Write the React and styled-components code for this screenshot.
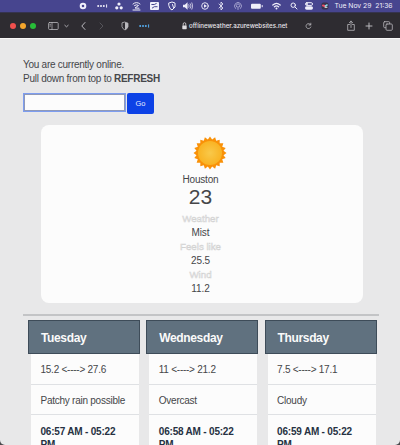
import React from "react";
import styled, { createGlobalStyle } from "styled-components";

const Global = createGlobalStyle`
  *{box-sizing:border-box}
  html,body{margin:0;height:445px;overflow:hidden;background:#4a4a4d}
  body{font-family:"Liberation Sans",Arial,sans-serif;color:#454649}
`;
const Screen = styled.div`
  width:400px;height:445px;overflow:hidden;display:flex;flex-direction:column;
`;
const MenuBar = styled.header`
  display:flex;align-items:center;height:13px;flex:none;background:#47458f;color:#f0effa;
  border-bottom:1px solid #35334f;
`;
const Clock = styled.div`
  margin-left:5.5px;font:6.8px/12px Inter,sans-serif;white-space:pre;
`;
const BrowserBar = styled.nav`
  display:flex;align-items:center;height:25px;flex:none;background:#2e2c31;color:#b9b8bd;
`;
const Light = styled.i`
  width:6px;height:6px;border-radius:50%;flex:none;background:${p => p.$color};
  margin-left:${p => p.$gap}px;
`;
const Address = styled.div`
  margin-left:2.5px;width:94.5px;color:#e9e8ec;font:500 6.2px/25px Inter,sans-serif;white-space:nowrap;
`;
const Icon = styled.svg`
  display:block;flex:none;width:${p => p.$w}px;height:${p => p.$h || 10}px;
  margin-left:${p => p.$gap}px;fill:none;stroke:currentColor;stroke-width:1;
  stroke-linecap:round;stroke-linejoin:round;color:${p => p.$color || "inherit"};
  .solid{fill:currentColor;stroke:none}
`;
const Page = styled.main`
  height:407px;flex:none;border-top:1px solid #f8f8f8;padding:19px 21px 0 23px;
  background:#e8e8e9;border-radius:0 0 5px 5px;overflow:hidden;
`;
const Status = styled.p`
  margin:0;font-size:10px;line-height:14px;letter-spacing:-.26px;
`;
const SearchForm = styled.form`
  display:flex;align-items:flex-start;margin-top:7px;height:22px;
`;
const SearchInput = styled.input`
  width:103px;height:19px;margin:0;padding:0 4px;border:1px solid #7d9df0;
  outline:0;background:#fcfcfc;box-shadow:inset 0 0 0 1px #8f99b8;font-size:9px;
`;
const GoButton = styled.button`
  width:27px;height:21px;margin:0 0 0 1px;padding:0;border:0;border-radius:2px;
  background:#0d42e6;color:#e4ebff;font:7.5px/21px "Liberation Sans",sans-serif;
`;
const Card = styled.section`
  width:322px;height:178px;margin:10px 0 0 18px;border-radius:8px;background:#fcfcfc;
  display:flex;flex-direction:column;align-items:center;padding:11px 3px 0 0;
`;
const Sun = styled.svg`
  display:block;width:34px;height:34px;flex:none;margin-left:19px;
`;
const City = styled.div`font-size:10px;line-height:12px;margin-top:4px;letter-spacing:-.2px;`;
const Temperature = styled.div`font-size:21px;line-height:22px;`;
const Readings = styled.dl`
  margin:4px 0 0;text-align:center;font-size:10px;line-height:14px;
`;
const Label = styled.dt`
  color:#f3f3f3;-webkit-text-stroke:.5px #d2d2d2;font-size:9.7px;height:14px;
`;
const Value = styled.dd`margin:0;height:14px;letter-spacing:-.1px;`;
const Divider = styled.hr`
  width:356px;height:2px;margin:11px 0 0;border:0;background:#c3c4c6;
`;
const Forecast = styled.section`
  display:grid;grid-template-columns:repeat(3,112px);column-gap:6.3px;margin:4px 0 0 5px;width:350px;
`;
const Day = styled.article`min-width:0;`;
const DayTitle = styled.h2`
  margin:0;height:34px;border:1px solid #3e4c59;background:#60717f;color:#fafafa;
  padding:0 12px;font-size:12px;line-height:34px;letter-spacing:-.36px;
`;
const Cell = styled.div`
  height:30.5px;margin:0 1px 0 3px;padding:0 9.5px;background:#fcfcfc;border-bottom:1px solid #dfe1e4;
  font-size:10px;line-height:32px;letter-spacing:-.25px;white-space:nowrap;
`;
const Daylight = styled.div`
  height:40px;margin:0 1px 0 3px;padding:9.5px 8px 0 9.5px;background:#fcfcfc;
  color:#263142;font-size:10px;font-weight:700;line-height:13.5px;letter-spacing:-.2px;
`;

const days = [
  { name: "Tuesday", range: "15.2 <----> 27.6", weather: "Patchy rain possible", hours: "06:57 AM - 05:22 PM" },
  { name: "Wednesday", range: "11 <----> 21.2", weather: "Overcast", hours: "06:58 AM - 05:22 PM" },
  { name: "Thursday", range: "7.5 <----> 17.1", weather: "Cloudy", hours: "06:59 AM - 05:22 PM" },
];

const sunPoints = Array.from({ length: 40 }, (_, i) => {
  const r = i % 2 ? 13.7 : 16.5;
  const a = (i * Math.PI) / 20 - Math.PI / 2;
  return `${(17 + r * Math.cos(a)).toFixed(2)},${(17 + r * Math.sin(a)).toFixed(2)}`;
}).join(" ");

function Dots({ gap, color }) {
  return (
    <Icon $w={11} $gap={gap} $color={color} viewBox="0 0 11 10">
      <g className="solid"><circle cx="1.2" cy="5" r="1" /><circle cx="4" cy="5" r="1" /><circle cx="6.8" cy="5" r="1" /></g>
      <path d="M9.6 3.8v2.4" />
    </Icon>
  );
}

function StatusIcons() {
  return (
    <>
      <Icon $w={8} $gap={79} viewBox="0 0 8 10"><circle cx="4" cy="5" r="2.3" strokeWidth="2" /></Icon>
      <Dots gap={10} />
      <Icon $w={8} $gap={6.5} viewBox="0 0 8 10"><g className="solid"><circle cx="4" cy="3" r="1.6" /><circle cx="1.8" cy="6.8" r="1.6" /><circle cx="6.2" cy="6.8" r="1.6" /></g></Icon>
      <Icon $w={9} $gap={9} viewBox="0 0 9 10"><path d="M1 3q3.5-3 7 0M2.5 4.5q2-1.5 4 0L3 7l4 .2M1 9h7" /></Icon>
      <Icon $w={9} $gap={9.5} viewBox="0 0 9 10"><rect className="solid" y="1" width="9" height="8" rx="1" /><path d="M1.8 3.5h2.5l2-1M2.3 7l2-1.3h2.8" stroke="#47458f" /></Icon>
      <Icon $w={8} $gap={8.5} viewBox="0 0 8 10"><path d="M1 2l3-1 3 1v4L4 9 2 7.5 1 5zM4.5 3.5l1 3" /></Icon>
      <Icon $w={10} $gap={7.5} viewBox="0 0 11 10"><path className="solid" d="M0 3.7h2L5 1v8L2 6.5H0z" /><path d="M6.4 3.5q1 1.5 0 3M8 2.5q2 2.5 0 5M9.8 1.5q2 3.5 0 7" strokeWidth=".8" /></Icon>
      <Icon $w={8} $gap={7.5} viewBox="0 0 8 10"><circle cx="4" cy="5" r="3.3" strokeWidth=".9" /><path className="solid" d="M3 3.2L6 5 3 6.8z" /></Icon>
      <Icon $w={6} $gap={9.5} viewBox="0 0 6 10"><path d="M1 3l4 4-2 2V1l2 2-4 4" strokeWidth=".8" /></Icon>
      <Icon $w={8} $gap={9.5} viewBox="0 0 8 10" $color="#aaa8d2"><path d="M1.5 7.5a3.5 3.5 0 115 0M2.7 6a1.8 1.8 0 112.6 0M4 5.5v3" strokeWidth=".9" /></Icon>
      <Icon $w={12} $gap={9} viewBox="0 0 12 10"><rect className="solid" x="0" y="2.7" width="9.8" height="5" rx="1" /><path d="M11.2 4.5v1.3" /></Icon>
      <Icon $w={9} $gap={9} viewBox="0 0 9 10"><path d="M.8 4q3.7-3.4 7.4 0M2.4 5.8q2.1-1.9 4.2 0" strokeWidth="1.2" /><circle className="solid" cx="4.5" cy="7.5" r="1" /></Icon>
      <Icon $w={8} $gap={9} viewBox="0 0 8 10"><circle cx="3.2" cy="4.2" r="2.2" /><path d="M5 6l2 2" /></Icon>
      <Icon $w={8} $gap={7.5} viewBox="0 0 8 10"><rect x=".5" y="1.7" width="7" height="2.7" rx="1.3" /><rect className="solid" y="5.2" width="8" height="3.5" rx="1.7" /><circle className="solid" cx="2" cy="3" r="1" /></Icon>
      <Icon $w={8} $gap={8} viewBox="0 0 8 10"><rect x=".5" y="1.5" width="7" height="7" rx="2" fill="#38334d" stroke="none" /><path d="M2 4.5L4 5" stroke="#ef5065" strokeWidth="2" /><path d="M4.5 5L6 4" stroke="#87d9e9" strokeWidth="1.6" /><path d="M4 6.3h2" stroke="#eee" /></Icon>
    </>
  );
}

function BrowserControls() {
  return (
    <BrowserBar>
      <Light $color="#f0504d" $gap={10} /><Light $color="#f5a62c" $gap={4} /><Light $color="#28bd38" $gap={4} />
      <Icon $w={11} $gap={12} viewBox="0 0 11 10"><rect x=".6" y="1.5" width="9.6" height="7" rx="1" strokeWidth=".8" /><path d="M4 1.5v7M1.8 3.3h.8M1.8 5h.8" strokeWidth=".7" /></Icon>
      <Icon $w={5} $gap={5} viewBox="0 0 5 10"><path d="M.8 4.3l1.7 1.5 1.7-1.5" strokeWidth=".9" /></Icon>
      <Icon $w={5} $gap={12} viewBox="0 0 5 10"><path d="M4 1.5L.8 5 4 8.5" /></Icon>
      <Icon $w={5} $gap={13} $color="#605e64" viewBox="0 0 5 10"><path d="M1 2l3 3-3 3" strokeWidth=".8" /></Icon>
      <Icon $w={8} $gap={16.5} viewBox="0 0 8 10"><path d="M4 1.2l3 1v3.5Q6.3 8 4 9 1.7 8 1 5.7V2.2z" strokeWidth=".8" /><path className="solid" d="M4 1.2l3 1v3.5Q6.3 8 4 9z" /></Icon>
      <Dots gap={10} color="#55adf0" />
      <Icon $w={5} $gap={32} viewBox="0 0 5 10" $color="#dddce0"><rect className="solid" x=".3" y="4.4" width="4.4" height="3.8" rx=".6" /><path d="M1.2 4.4V3a1.3 1.3 0 012.6 0v1.4" strokeWidth=".8" /></Icon>
      <Address>offlineweather.azurewebsites.net</Address>
      <Icon $w={7} $gap={21.5} viewBox="0 0 7 10"><path d="M5.7 3.8a2.5 2.5 0 10.2 2.2M5.8 2.2v1.8H4" strokeWidth=".8" /></Icon>
      <Icon $w={8} $gap={34.5} $h={12} viewBox="0 0 8 12"><path d="M2.5 4.5H.7v5.8h6.6V4.5H5.5M4 7.5V1.2M2.3 2.8L4 1.2l1.7 1.6" strokeWidth=".8" /></Icon>
      <Icon $w={8} $gap={10} viewBox="0 0 8 10"><path d="M4 2v6M1 5h6" /></Icon>
      <Icon $w={10} $gap={10} viewBox="0 0 10 10"><rect x=".7" y=".7" width="6" height="6" rx="1" strokeWidth=".8" /><rect x="3" y="3" width="6.3" height="6.3" rx="1" fill="#2e2c31" strokeWidth=".8" /></Icon>
    </BrowserBar>
  );
}

export default function App() {
  return (
    <Screen>
      <Global />
      <MenuBar><StatusIcons /><Clock>Tue Nov 29  21:36</Clock></MenuBar>
      <BrowserControls />
      <Page>
        <Status>You are currently online.<br />Pull down from top to <b>REFRESH</b></Status>
        <SearchForm onSubmit={e => e.preventDefault()}><SearchInput aria-label="City" /><GoButton>Go</GoButton></SearchForm>
        <Card>
          <Sun viewBox="0 0 34 34">
            <defs><radialGradient id="sunCore"><stop offset="0" stopColor="#f9c94a" /><stop offset="1" stopColor="#f9b323" /></radialGradient></defs>
            <polygon points={sunPoints} fill="#f99108" />
            <circle cx="17" cy="17" r="12" fill="url(#sunCore)" />
          </Sun>
          <City>Houston</City>
          <Temperature>23</Temperature>
          <Readings>
            <Label>Weather</Label><Value>Mist</Value>
            <Label>Feels like</Label><Value>25.5</Value>
            <Label>Wind</Label><Value>11.2</Value>
          </Readings>
        </Card>
        <Divider />
        <Forecast>
          {days.map(day => (
            <Day key={day.name}>
              <DayTitle>{day.name}</DayTitle>
              <Cell>{day.range}</Cell>
              <Cell>{day.weather}</Cell>
              <Daylight>{day.hours}</Daylight>
            </Day>
          ))}
        </Forecast>
      </Page>
    </Screen>
  );
}
